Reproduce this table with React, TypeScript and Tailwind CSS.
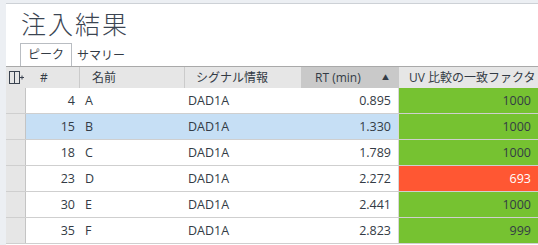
import React from "react";

const rows = [
  { id: 4, name: "A", sig: "DAD1A", rt: "0.895", f: "1000", bad: false, sel: false },
  { id: 15, name: "B", sig: "DAD1A", rt: "1.330", f: "1000", bad: false, sel: true },
  { id: 18, name: "C", sig: "DAD1A", rt: "1.789", f: "1000", bad: false, sel: false },
  { id: 23, name: "D", sig: "DAD1A", rt: "2.272", f: "693", bad: true, sel: false },
  { id: 30, name: "E", sig: "DAD1A", rt: "2.441", f: "1000", bad: false, sel: false },
  { id: 35, name: "F", sig: "DAD1A", rt: "2.823", f: "999", bad: false, sel: false },
];

const cols = "grid grid-cols-[20px_54px_105px_116px_98px_139px]";

function ColumnIcon() {
  return (
    <svg width="16" height="14" viewBox="0 0 16 14" className="shrink-0 text-[#3a4350]">
      <rect x="0.5" y="0.5" width="10" height="12" fill="none" stroke="currentColor" />
      <line x1="5.5" y1="0.5" x2="5.5" y2="12.5" stroke="currentColor" />
      <line x1="11" y1="6.5" x2="15" y2="6.5" stroke="currentColor" />
      <line x1="13" y1="4.5" x2="13" y2="8.5" stroke="currentColor" />
    </svg>
  );
}

export default function App() {
  return (
    <div
      className="w-[538px] h-[245px] overflow-hidden bg-[#eceff3] pl-[6px] pt-[3px] text-[#333b45]"
      style={{ fontFamily: '"Open Sans", "Noto Sans CJK JP", sans-serif' }}
    >
      <div className="h-full bg-white border-t border-[#cdd1d6] flex flex-col">
        <div
          className="pl-[15px] pt-[2px] h-[39px] text-[25px] leading-[34px] font-light text-[#3b4552] tracking-[2px] whitespace-nowrap"
          style={{ fontFamily: '"Noto Sans CJK JP", sans-serif' }}
        >
          注入結果
        </div>
        <div className="flex items-end pl-[14px] h-[23px] text-[12px] whitespace-nowrap">
          <div className="h-[23px] px-[7px] border border-b-0 border-[#b9bdc2] bg-white leading-[21px]">
            ピーク
          </div>
          <div className="px-[5px] leading-[21px]">サマリー</div>
        </div>
        <div
          className={`${cols} h-[22px] bg-[#e6e6e6] border-t border-[#a9a9a9] text-[12px] leading-[21px] whitespace-nowrap`}
        >
          <div className="flex items-center pl-[3px] overflow-hidden">
            <ColumnIcon />
          </div>
          <div className="pl-[14px] border-r border-[#cbcbcb]">#</div>
          <div className="pl-[12px] border-r border-[#cbcbcb]">名前</div>
          <div className="pl-[11px]">シグナル情報</div>
          <div className="pl-[14px] bg-[#c9c9c9] flex items-center justify-between pr-[10px]">
            <span>RT (min)</span>
            <span className="text-[7px] leading-none">▲</span>
          </div>
          <div className="pl-[10px] overflow-hidden">
            <span className="inline-block pr-[8px] border-r border-white">UV 比較の一致ファクタ</span>
          </div>
        </div>
        {rows.map((r) => (
          <div
            key={r.id}
            className={`${cols} h-[26px] text-[12.5px] leading-[25px] border-b border-[#cfcfcf] whitespace-nowrap ${
              r.sel ? "bg-[#c6dff5]" : "bg-white"
            }`}
          >
            <div className="bg-[#e6e6e6] border-r border-[#c4c4c4]" />
            <div className="text-right pr-[5px]">{r.id}</div>
            <div className="pl-[5px]">{r.name}</div>
            <div className="pl-[3px]">{r.sig}</div>
            <div className="text-right pr-[7px] border-r border-[#d8d8d8]">{r.rt}</div>
            <div
              className={`text-right pr-[7px] ${
                r.bad ? "bg-[#ff5733] text-white" : "bg-[#76c231]"
              }`}
            >
              {r.f}
            </div>
          </div>
        ))}
      </div>
    </div>
  );
}
